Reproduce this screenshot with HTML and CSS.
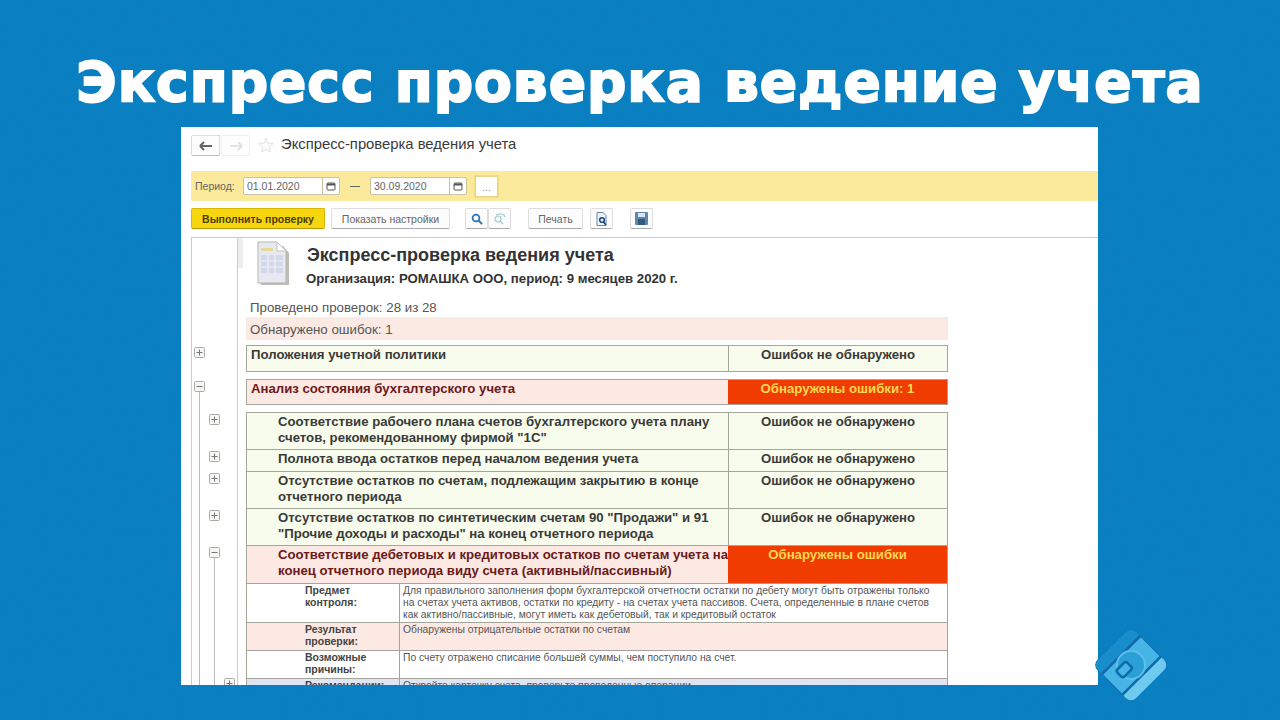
FILE: index.html
```html
<!DOCTYPE html>
<html lang="ru">
<head>
    <meta charset="UTF-8">
    <title>Экспресс проверка ведение учета</title>
    <link rel="stylesheet" href="styles.css">
</head>
<body>
    <svg class="defs" width="0" height="0">
        <symbol id="plus" viewBox="0 0 11 11"><rect x="0.5" y="0.5" width="10" height="10" rx="1" fill="#f6f6f2" stroke="#aaa"/><path d="M2.5 5.5h6M5.5 2.5v6" stroke="#777"/></symbol>
        <symbol id="minus" viewBox="0 0 11 11"><rect x="0.5" y="0.5" width="10" height="10" rx="1" fill="#f6f6f2" stroke="#aaa"/><path d="M2.5 5.5h6" stroke="#777"/></symbol>
        <symbol id="cal" viewBox="0 0 10 10"><rect x="1" y="2" width="8" height="7" rx="1" fill="none" stroke="#555"/><path d="M1 3.5h8" stroke="#555" stroke-width="2"/></symbol>
    </svg>

    <h1 class="title">Экспресс проверка ведение учета</h1>

    <div class="window">
        <div class="header">
            <div class="nav">
                <span class="nav-btn"><svg width="14" height="10" viewBox="0 0 14 10"><path d="M1 5h12M1 5l4-4M1 5l4 4" fill="none" stroke="#666" stroke-width="2"/></svg></span>
                <span class="nav-btn off"><svg width="14" height="10" viewBox="0 0 14 10"><path d="M1 5h12M13 5L9 1M13 5L9 9" fill="none" stroke="#ddd" stroke-width="1.6"/></svg></span>
            </div>
            <svg class="star" width="16" height="16" viewBox="0 0 16 16"><path d="M8 1l2 5 5.500.4-4.200 3.500 1.300 5.300L8 12.300 3.400 15.200l1.300-5.300L.5 6.400 6 6z" fill="#fbfbfb" stroke="#e2e2e2"/></svg>
            <span class="header-text">Экспресс-проверка ведения учета</span>
        </div>

        <div class="period">
            <span class="period-label">Период:</span>
            <span class="date"><span class="date-val">01.01.2020</span><span class="date-btn"><svg width="10" height="10"><use href="#cal"/></svg></span></span>
            <span class="dash"></span>
            <span class="date"><span class="date-val">30.09.2020</span><span class="date-btn"><svg width="10" height="10"><use href="#cal"/></svg></span></span>
            <span class="more">...</span>
        </div>

        <div class="toolbar">
            <span class="btn primary">Выполнить проверку</span>
            <span class="btn settings">Показать настройки</span>
            <span class="btn-pair">
                <span class="btn icon"><svg width="12" height="12" viewBox="0 0 12 12"><circle cx="5" cy="5" r="3.400" fill="none" stroke="#2a78b8" stroke-width="1.800"/><path d="M7.500 7.500L11 11" stroke="#2a78b8" stroke-width="2"/></svg></span>
                <span class="btn icon"><svg width="14" height="12" viewBox="0 0 14 12"><circle cx="5" cy="6" r="3" fill="none" stroke="#9cc" stroke-width="1.200"/><path d="M7 8l3 3M3 2q4-2 8 0l1 2" fill="none" stroke="#9cc" stroke-width="1.200"/></svg></span>
            </span>
            <span class="btn print">Печать</span>
            <span class="btn icon solo preview"><svg width="12" height="14" viewBox="0 0 12 14"><path d="M1 .5h6l3 3v10H1z" fill="#eef3fa" stroke="#6a86a8"/><circle cx="6" cy="8" r="2.300" fill="none" stroke="#16467a" stroke-width="1.500"/><path d="M7.500 10l2.500 3" stroke="#16467a" stroke-width="1.600"/></svg></span>
            <span class="btn icon solo save"><svg width="13" height="13" viewBox="0 0 13 13"><rect width="13" height="13" rx="1" fill="#5f86ad"/><rect x="3" y="1" width="7" height="4" fill="#dde6f0"/><rect x="3" y="7" width="7" height="6" fill="#33597f"/></svg></span>
        </div>

        <div class="report">
            <div class="row">
                <div class="gutter"></div>
                <div class="doc-head">
                    <span class="grip"></span>
                    <svg class="doc-icon" width="34" height="46" viewBox="0 0 34 46">
                        <path d="M4 5h22l6 7v32H4z" fill="#bdbdb5"/>
                        <path d="M1 1h19l9 9v32H1z" fill="#e6e9f2" stroke="#b5b5ad"/>
                        <path d="M20 1v9h9z" fill="#fff" stroke="#c5c5c0"/>
                        <path d="M4 7h12v3H4z" fill="#e8d890"/>
                        <path d="M4 14h22v18H4z" fill="#d3d9ea"/>
                        <path d="M4 20h22M4 26h22M11 14v18M18 14v18" stroke="#f2f4f9"/>
                    </svg>
                    <div>
                        <div class="doc-title">Экспресс-проверка ведения учета</div>
                        <div class="doc-org">Организация: РОМАШКА ООО, период: 9 месяцев 2020 г.</div>
                    </div>
                </div>
            </div>

            <div class="row">
                <div class="gutter"></div>
                <div class="summary">Проведено проверок: 28 из 28</div>
            </div>
            <div class="row">
                <div class="gutter"></div>
                <div class="summary bad">Обнаружено ошибок: 1</div>
            </div>

            <div class="row">
                <div class="gutter lv1 top-5"><svg class="tg"><use href="#plus"/></svg></div>
                <div class="cells ok closed mt-5 h27">
                    <div class="name">Положения учетной политики</div>
                    <div class="status">Ошибок не обнаружено</div>
                </div>
            </div>

            <div class="row">
                <div class="gutter lv1 top-7 start1"><svg class="tg"><use href="#minus"/></svg></div>
                <div class="cells err closed mt-7 h26">
                    <div class="name">Анализ состояния бухгалтерского учета</div>
                    <div class="status">Обнаружены ошибки: 1</div>
                </div>
            </div>

            <div class="row">
                <div class="gutter lv2 top-7 line1"><svg class="tg"><use href="#plus"/></svg></div>
                <div class="cells ok mt-7 h37">
                    <div class="name sub">Соответствие рабочего плана счетов бухгалтерского учета плану счетов, рекомендованному фирмой "1С"</div>
                    <div class="status">Ошибок не обнаружено</div>
                </div>
            </div>
            <div class="row">
                <div class="gutter lv2 line1"><svg class="tg"><use href="#plus"/></svg></div>
                <div class="cells ok h22">
                    <div class="name sub">Полнота ввода остатков перед началом ведения учета</div>
                    <div class="status">Ошибок не обнаружено</div>
                </div>
            </div>
            <div class="row">
                <div class="gutter lv2 line1"><svg class="tg"><use href="#plus"/></svg></div>
                <div class="cells ok h37">
                    <div class="name sub">Отсутствие остатков по счетам, подлежащим закрытию в конце отчетного периода</div>
                    <div class="status">Ошибок не обнаружено</div>
                </div>
            </div>
            <div class="row">
                <div class="gutter lv2 line1"><svg class="tg"><use href="#plus"/></svg></div>
                <div class="cells ok h37">
                    <div class="name sub">Отсутствие остатков по синтетическим счетам 90 "Продажи" и 91 "Прочие доходы и расходы" на конец отчетного периода</div>
                    <div class="status">Ошибок не обнаружено</div>
                </div>
            </div>
            <div class="row">
                <div class="gutter lv2 line1 start2"><svg class="tg"><use href="#minus"/></svg></div>
                <div class="cells err h38">
                    <div class="name sub">Соответствие дебетовых и кредитовых остатков по счетам учета на конец отчетного периода виду счета (активный/пассивный)</div>
                    <div class="status">Обнаружены ошибки</div>
                </div>
            </div>

            <div class="row">
                <div class="gutter line1 line2"></div>
                <div class="cells detail h39">
                    <div class="label">Предмет контроля:</div>
                    <div class="text">Для правильного заполнения форм бухгалтерской отчетности остатки по дебету могут быть отражены только на счетах учета активов, остатки по кредиту - на счетах учета пассивов. Счета, определенные в плане счетов как активно/пассивные, могут иметь как дебетовый, так и кредитовый остаток</div>
                </div>
            </div>
            <div class="row">
                <div class="gutter line1 line2"></div>
                <div class="cells detail pink h28">
                    <div class="label">Результат проверки:</div>
                    <div class="text">Обнаружены отрицательные остатки по счетам</div>
                </div>
            </div>
            <div class="row">
                <div class="gutter line1 line2"></div>
                <div class="cells detail h28">
                    <div class="label">Возможные причины:</div>
                    <div class="text">По счету отражено списание большей суммы, чем поступило на счет.</div>
                </div>
            </div>
            <div class="row">
                <div class="gutter lv3 line1 line2"><svg class="tg"><use href="#plus"/></svg></div>
                <div class="cells detail lilac h28">
                    <div class="label">Рекомендации:</div>
                    <div class="text">Откройте карточку счета, проверьте проведенные операции.</div>
                </div>
            </div>
        </div>
    </div>

    <svg class="logo" width="80" height="80" viewBox="0 0 80 80">
        <g transform="rotate(-45 40 40)">
            <rect x="13" y="13" width="54" height="54" rx="7" fill="#47b4e6" stroke="#0f6fae" stroke-width="1"/>
            <path d="M13 25V20a7 7 0 0 1 7-7h40a7 7 0 0 1 7 7v5z" fill="#178ecb"/>
            <path d="M13 56v4a7 7 0 0 0 7 7h40a7 7 0 0 0 7-7v-4z" fill="#6fcaf0"/>
            <path d="M13 26h54M13 55h54" stroke="#0e6aa8" stroke-width="2.500"/>
            <circle cx="40" cy="40" r="14" fill="#2b9fd8" stroke="#5cc0ec" stroke-width="2"/>
            <rect x="25" y="33.500" width="14" height="10" rx="2.500" fill="#47b4e6" stroke="#0e6aa8" stroke-width="2.500"/>
        </g>
    </svg>
</body>
</html>
```

FILE: styles.css
```css
html, body {
    margin: 0;
    height: 720px;
    overflow: hidden;
}
body {
    position: relative;
    font-family: 'Liberation Sans', Arial, sans-serif;
    background-color: #0c7dc2;
    background-image: url("data:image/svg+xml,%3Csvg xmlns='http://www.w3.org/2000/svg' width='240' height='240'%3E%3Cfilter id='n'%3E%3CfeTurbulence type='fractalNoise' baseFrequency='.7' numOctaves='2'/%3E%3CfeColorMatrix values='0 0 0 0 0 0 0 0 0 .25 0 0 0 0 .5 1.200 0 0 0 -.42'/%3E%3C/filter%3E%3Crect width='240' height='240' filter='url(%23n)'/%3E%3C/svg%3E");
}
.defs {
    display: block;
    height: 0;
}
.title {
    margin: 0;
    height: 127px;
    line-height: 165px;
    text-align: center;
    font-family: 'DejaVu Sans', sans-serif;
    font-size: 55px;
    font-weight: bold;
    letter-spacing: 1px;
    color: #fff;
    white-space: nowrap;
    -webkit-text-stroke: 2px #fff;
}

.window {
    width: 917px;
    height: 558px;
    margin-left: 181px;
    background: #fff;
    overflow: hidden;
    color: #3a3a3a;
    padding-left: 10px;
    box-sizing: border-box;
}

/* шапка */
.header {
    display: flex;
    align-items: flex-start;
    height: 44px;
    padding-top: 8px;
    box-sizing: border-box;
}
.nav {
    display: flex;
    width: 59px;
    height: 21px;
}
.nav-btn {
    display: flex;
    align-items: center;
    justify-content: center;
    width: 29px;
    border: 1px solid #ddd;
    border-bottom-color: #bbb;
    border-radius: 2px 0 0 2px;
    box-sizing: border-box;
    background: #fdfdfd;
}
.nav-btn.off {
    border-color: #f0f0f0;
    border-radius: 0 2px 2px 0;
    margin-left: 1px;
}
.star {
    margin: 2px 0 0 8px;
}
.header-text {
    margin-left: 7px;
    font-size: 14.8px;
    line-height: 18px;
    color: #3a3a3a;
}

/* период */
.period {
    display: flex;
    align-items: center;
    height: 30px;
    background: #fbe99c;
    font-size: 10.5px;
    color: #666;
}
.period-label {
    width: 52px;
    padding-left: 4px;
    box-sizing: border-box;
}
.date {
    display: flex;
    width: 97px;
    height: 18px;
    border: 1px solid #c9c3a0;
    border-radius: 2px;
    box-sizing: border-box;
    background: #fff;
}
.date-val {
    flex: 1;
    padding-left: 3px;
    line-height: 16px;
}
.date-btn {
    display: flex;
    align-items: center;
    justify-content: center;
    width: 16px;
    border-left: 1px solid #c9c3a0;
}
.dash {
    width: 10px;
    height: 1px;
    margin: 0 10px;
    background: #666;
}
.more {
    width: 23px;
    height: 21px;
    margin-left: 8px;
    line-height: 21px;
    text-align: center;
    color: #888;
    background: #fff;
    border: 1px solid #e8d68a;
    box-sizing: border-box;
    box-shadow: 0 0 0 1px #f5dc80;
}

/* кнопки */
.toolbar {
    display: flex;
    align-items: center;
    height: 21px;
    margin-top: 7px;
    font-size: 10.5px;
}
.btn {
    display: flex;
    align-items: center;
    justify-content: center;
    height: 21px;
    box-sizing: border-box;
    border: 1px solid #ddd;
    border-bottom-color: #aaa;
    border-radius: 2px;
    background: #fcfcfc;
    color: #666;
}
.primary {
    width: 134px;
    background: #f7d60f;
    border-color: #d9b800;
    border-bottom-color: #b59a00;
    color: #4a3f00;
    font-weight: bold;
}
.settings {
    width: 119px;
    margin-left: 6px;
}
.btn-pair {
    display: flex;
    margin-left: 15px;
}
.icon {
    width: 23px;
}
.print {
    width: 55px;
    margin-left: 17px;
}
.preview {
    margin-left: 7px;
}
.save {
    margin-left: 17px;
}

/* отчет */
.report {
    margin-top: 8px;
    border-top: 1px solid #ccc;
}
.row {
    display: flex;
}
.gutter {
    flex: none;
    width: 47px;
    box-sizing: border-box;
    border-left: 1px solid #ccc;
    border-right: 1px solid #ccc;
    margin-right: 8px;
    background-repeat: no-repeat;
}
.tg {
    display: block;
    width: 11px;
    height: 11px;
}
.lv1 { padding-left: 2px; }
.lv2 { padding-left: 17px; padding-top: 2px; }
.lv3 { padding-left: 32px; padding-top: 0; }
.top-5 { padding-top: 7px; }
.top-7 { padding-top: 9px; }
.line1 {
    background-image: linear-gradient(#bbb, #bbb);
    background-size: 1px 100%;
    background-position: 7px 0;
}
.line1.line2 {
    background-image: linear-gradient(#bbb, #bbb), linear-gradient(#bbb, #bbb);
    background-size: 1px 100%, 1px 100%;
    background-position: 7px 0, 22px 0;
}
.start1 {
    background-image: linear-gradient(#bbb, #bbb);
    background-size: 1px 100%;
    background-position: 7px 18px;
}
.start2 {
    background-image: linear-gradient(#bbb, #bbb), linear-gradient(#bbb, #bbb);
    background-size: 1px 100%, 1px 100%;
    background-position: 7px 0, 22px 13px;
}

.doc-head {
    display: flex;
    height: 61px;
    margin-left: -8px;
}
.grip {
    flex: none;
    width: 5px;
    height: 30px;
    background: #eee;
}
.doc-icon {
    flex: none;
    margin: 3px 0 0 14px;
}
.doc-title {
    margin: 7px 0 0 16px;
    font-size: 18px;
    font-weight: bold;
    line-height: 21px;
    color: #333;
}
.doc-org {
    margin: 5px 0 0 15px;
    font-size: 13.2px;
    font-weight: bold;
    line-height: 16px;
    color: #333;
}
.summary {
    width: 702px;
    box-sizing: border-box;
    padding-left: 4px;
    font-size: 13.3px;
    line-height: 18px;
    height: 18px;
    color: #555;
}
.summary.bad {
    height: 23px;
    line-height: 25px;
    background: #fbe9e3;
}

.cells {
    display: flex;
    flex: none;
    width: 702px;
    box-sizing: border-box;
    border: 1px solid #a4a69a;
    border-bottom: 0;
    font-size: 13.2px;
    font-weight: bold;
    line-height: 16px;
}
.closed {
    border-bottom: 1px solid #a4a69a;
}
.mt-5 { margin-top: 5px; }
.mt-7 { margin-top: 7px; }
.h22 { height: 22px; }
.h26 { height: 26px; }
.h27 { height: 27px; }
.h28 { height: 28px; }
.h37 { height: 37px; }
.h38 { height: 38px; }
.h39 { height: 39px; }
.name {
    width: 481px;
    box-sizing: border-box;
    padding: 1px 0 0 4px;
}
.name.sub {
    padding-left: 31px;
}
.status {
    flex: 1;
    padding-top: 1px;
    text-align: center;
    border-left: 1px solid #a4a69a;
}
.ok {
    background: #f8fcec;
    color: #3a3a3a;
}
.err {
    background: #fce9e3;
    color: #6b1a1a;
}
.err .status {
    background: #f03c00;
    border-left: 0;
    color: #ffd84f;
}

.detail {
    background: #fff;
    font-weight: normal;
    line-height: 12px;
    color: #555;
}
.detail .label {
    flex: none;
    width: 152px;
    box-sizing: border-box;
    padding: 0 20px 0 58px;
    font-size: 10.5px;
    font-weight: bold;
    color: #444;
}
.detail .text {
    flex: 1;
    padding: 1px 17px 0 3px;
    font-size: 10.3px;
    border-left: 1px solid #a4a69a;
}
.pink { background: #fce9e3; }
.lilac { background: #dfe3f3; }

.logo {
    position: absolute;
    left: 1091px;
    top: 625px;
}
```
